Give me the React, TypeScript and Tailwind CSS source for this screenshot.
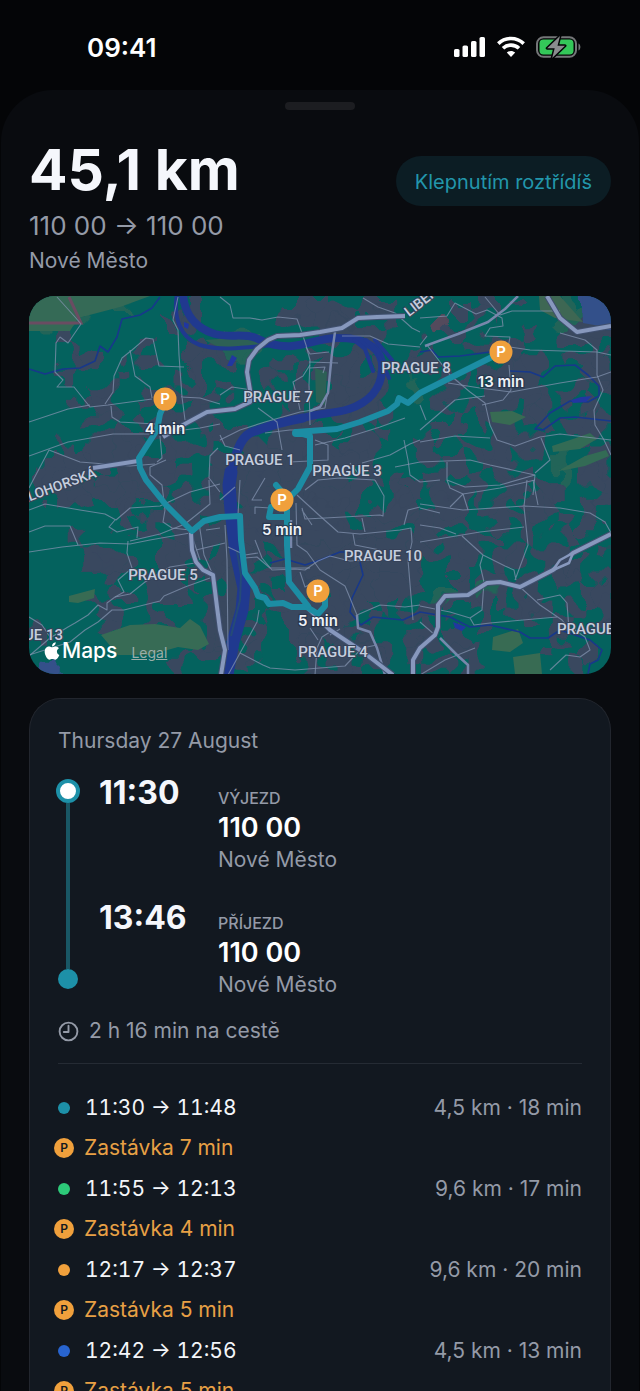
import React from "react";
import { FaApple } from "react-icons/fa";

const sans = "font-['Inter','Noto_Sans',sans-serif]";

/* Land cover: one character per cell. "." park, "#" built-up, "g" meadow, "b" industrial water, "r" campus */
const land = [
  "ggggggg....#.." + "...####..##." + "...#.#.#..g.bb",
  "gggg......##.." + "...######.#." + "....##....ggbb",
  "..#......#...." + "......####.." + "..r#....#..###",
  "...#...#...#.g" + "gg.......#.." + "#...####....#.",
  "...##...#..###" + "...#.####.#." + "##....###..###",
  "..#...#...##.." + "..#.#.####.." + "..##.####...##",
  "....##..####.#" + "....#.####.." + "g.#...####.#..",
  "...###.###.##." + "....#.#####." + "..#.###.##..#.",
  "....##..#####." + "...###.###.." + "...#.##.##.###",
  "......####..##" + "#..####.#.#." + "..##..#..#.##.",
  "..#.####.####." + "##########.." + ".#..#####....#",
  ".####.####...#" + "##########.." + "..##.##...g.##",
  "####.######.##" + "########.#.#" + ".##.#.###.g.##",
  "#.#######...##" + "#########..#" + "#.###.##.##..#",
  "...#..##.####." + "#########.##" + "..##.##.##..##",
  "......#.####.#" + "########.###" + "####..###.#.#.",
  "...#...##.####" + "###########." + "##..##..#..#..",
  "....##...###.#" + "##.#########" + "#####.##.##..#",
  "....###..##.##" + "#.##########" + "#..#..#..###..",
  ".....#..##.#.#" + "###.########" + "#..#.##.#.##.#",
  "......#.###..#" + "##.##.######" + "..g##g#.#...##",
  "....##..#...##" + "#.#######.#." + "###.##.###.#.#",
  ".....#..##..##" + "##..####.#.." + ".#...#..#.#..#",
  "#.....##..#.##" + ".#..######.." + "##.#......#...",
  "...........###" + "##..##.#.##." + "#..##....#..#.",
  ".b........#..#" + "#....####..." + ".##.#......#..",
];

const cover: Record<string, string> = {
  "#": "#39485f",
  g: "#226458",
  b: "#34508a",
  r: "#544a5c",
};

const cells = land.flatMap((row, r) =>
  [...row].flatMap((c, i) =>
    cover[c]
      ? [
          <rect
            key={`${r}-${i}`}
            x={29 + i * 14.55}
            y={296 + r * 14.55}
            width="15"
            height="15"
            fill={cover[c]}
          />,
        ]
      : [],
  ),
);

const streams = [
  "M29 369L45 374L63 369L80 368L95 361L100 346L108 352L117 337L122 319L140 315L152 308L160 297",
  "M420 352L432 350L438 357L460 356L490 352",
  "M510 371L530 372L543 377L555 366L575 365L588 375L599 386L599 396L588 402L570 401L550 413L535 429L543 430L560 418L575 417L611 421",
  "M270 563L285 559L305 565L320 560L340 552L352 552",
  "M360 562L363 575L352 598L350 612L361 625L373 617L403 620L420 612L450 617L470 627L490 625L520 632L530 638L548 638L560 630L590 640L602 650L598 660L590 664L588 674",
];

const streets = [
  "M57 297L75 317L81 324L68 343L60 337L56 343L55 372L63 380L57 387L74 387L90 407L108 405L152 399",
  "M29 422L68 409L90 405M105 404L113 392L114 376L122 358L132 350L146 338L153 339L159 366L184 367",
  "M130 350L135 376L150 387L152 398M111 406L112 417L120 422L155 424",
  "M178 297L173 320L178 330L179 355L182 397L185 420M181 397L200 398L220 404",
  "M29 456L68 442L113 434L150 434L200 428L220 424M49 450L29 488M49 450L80 462L130 466L155 464",
  "M160 436L162 458L157 462M166 460L150 467L150 475L162 485L165 510M218 448L210 456L209 478L220 492",
  "M29 510L45 504L80 510L105 514L116 520L130 508L160 506L190 492L220 484",
  "M115 520L109 527L117 532L138 527L137 538M29 532L45 526L70 526L78 545",
  "M29 552L62 547L100 543L130 544L150 540L190 533M130 541L160 534L185 524L210 504L209 480",
  "M128 541L127 553L132 568L118 580L124 592L115 597L107 603L107 610L98 605L88 615L75 623L68 627L50 638L29 656",
  "M115 597L130 594L145 582L170 567L195 563M124 610L160 601L164 596L185 587L210 578M124 610L112 610L98 622L85 630L70 642L29 655",
  "M29 617L42 625L52 640M165 510L163 522L172 528L190 530L200 560",
  "M220 297L230 305L233 318L250 318L262 320L278 317L297 319L302 333L306 345L310 360L309 385L310 425",
  "M306 347L310 354L329 352M309 362L338 363M310 365L303 376L293 382L298 400L300 410M310 368L325 367L323 373",
  "M220 395L232 387L252 390M258 408L277 422L282 450M220 440L240 430L265 422L300 412L325 408L328 390",
  "M220 435L225 446L240 450M265 433L290 430L310 430M315 445L345 438L380 427L405 418",
  "M315 440L328 445L328 460L290 462M362 463L390 455L410 444L420 440M395 467L420 462M358 473L350 463",
  "M342 336L370 336L388 344L420 347M363 298L378 307L395 313L412 328L420 332",
  "M404 440L408 460L410 475L420 482",
  "M420 318L447 316L455 303L476 314L487 310L502 318L503 326L490 328L485 336L510 337L508 348",
  "M485 297L500 315L512 311L560 311M420 345L427 336M427 345L450 375L470 392L485 403L490 425L497 440L515 446L540 437L560 434L611 440",
  "M510 347L530 350L597 352L611 355M509 365L511 390L503 400L482 405M448 383L480 388L511 392L560 383L597 377L611 372",
  "M560 333L585 340L597 350L597 375L603 390L594 410L595 425L604 440L611 455",
  "M420 430L455 400L485 396M420 405L426 420M420 442L455 436L490 438M420 462L470 460L490 465L535 475L533 495",
  "M541 438L550 460L535 473M447 462L447 480L465 487L500 485L535 475M420 482L440 480",
  "M450 507L463 494L500 488L535 480M420 504L463 510L524 506L560 508L590 513L605 522L611 533",
  "M463 494L468 510M447 480L450 488L463 494M524 506L527 480M533 480L538 505",
  "M524 507L528 545L515 580M420 542L480 532L524 527M462 536L483 555L480 565L484 582M483 555L505 566L514 570L516 580",
  "M420 525L440 528L456 534M420 508L440 513M521 588L540 605L562 620L570 630",
  "M537 600L560 595L567 603L569 630M484 582L482 610L470 618L474 625L490 623L557 617M420 606L450 612L470 618",
  "M575 630L585 637L590 650L580 657L566 655L550 670M420 622L435 635M420 675L445 660L475 648",
  "M220 500L235 487M265 478L252 500L262 500M255 514L255 507L270 508M228 547L245 555L258 553",
  "M255 540L262 558L272 570L295 569L305 570L318 561L330 556L350 561L372 560",
  "M245 558L257 557L270 568L310 568M296 503L297 545L307 552L320 570L345 586L350 598L357 615",
  "M297 495L320 516L338 532L360 534L400 530L411 528L412 542L408 560L413 620",
  "M302 510L312 525M302 508L305 519L325 518L380 515L383 516L384 496L375 480M305 490L318 480L340 478L375 480",
  "M362 518L365 532M353 534L355 545L380 550M420 507L408 510L404 525M357 615L380 605L405 607L420 605",
  "M300 572L305 587L318 580M318 640L310 628M330 632L322 637L317 648L315 675M340 629L330 635",
  "M240 653L263 665L270 668L295 670L345 666L362 648L377 645",
  "M259 610L257 622L228 675M206 530L220 528M196 550L225 543M225 525L227 560L228 650",
  "M199 523L204 555L213 575M240 480L238 515",
];

const motorways = [
  "M163 437L183 425L207 412L235 409L250 402L250 390L247 372L249 360L257 349L268 340L277 336L300 335L320 332L342 328L358 318L377 317L405 316",
  "M138 461L93 468",
  "M191 533L192 550L196 562L203 570L213 575L217 607L220 630L225 650L221 675",
  "M307 607L330 630L363 652L393 675",
  "M413 675L413 660L420 648L435 635L438 627L438 605L445 596L468 595L487 583L500 582L520 587L553 570L573 553L611 534",
  "M547 296L560 318L577 332L611 326",
];

const routes = [
  "M165 403L160 414L157 430L148 444L139 458L140 468L146 480L166 505L192 531L204 521L220 517L240 516L241 540L245 573L255 588L258 596L265 598L269 604L283 603L292 607L307 607L318 614L325 606V596",
  "M287 505V545L289 582L308 606M287 517H269L271 507M276 485L282 492",
  "M290 497L298 489L310 467V436L296 432L337 429L360 422L388 411L397 404L399 398L408 403L420 393L500 353",
];

const stops = [
  { x: 165, y: 399, label: "4 min" },
  { x: 501, y: 352, label: "13 min" },
  { x: 282, y: 500, label: "5 min" },
  { x: 318, y: 591, label: "5 min" },
];

const districts = [
  { x: 278, y: 402, name: "PRAGUE 7" },
  { x: 416, y: 373, name: "PRAGUE 8" },
  { x: 260, y: 465, name: "PRAGUE 1" },
  { x: 347, y: 476, name: "PRAGUE 3" },
  { x: 163, y: 580, name: "PRAGUE 5" },
  { x: 383, y: 561, name: "PRAGUE 10" },
  { x: 333, y: 657, name: "PRAGUE 4" },
  { x: 24, y: 640, name: "PRAGUE 13" },
  { x: 596, y: 634, name: "PRAGUE 15" },
];

function RouteMap() {
  return (
    <div className="relative mt-[21px] overflow-hidden rounded-[26px]">
      <svg viewBox="29 296 582 378" className="block w-full" role="img" aria-label="Route map of Prague">
        <defs>
          <filter id="rough" x="-5%" y="-5%" width="110%" height="110%" colorInterpolationFilters="sRGB">
            <feTurbulence type="fractalNoise" baseFrequency="0.04" numOctaves="2" seed="7" />
            <feDisplacementMap in="SourceGraphic" scale="44" xChannelSelector="R" yChannelSelector="G" />
          </filter>
        </defs>
        <rect x="29" y="296" width="582" height="378" fill="#04625e" />
        <g filter="url(#rough)">{cells}</g>
        <path d="M29 296H150L120 307L78 318L70 331H29Z" fill="#356a56" />
        <path d="M29 323L81 323L69 297" fill="none" stroke="#6a4c62" strokeWidth="3" />
        <path d="M101 635L130 625L155 624L180 628L190 619L200 626L209 644L198 650L178 647L150 655L118 655Z" fill="#376b55" />
        <path d="M493 637L518 629L523 643L510 652L492 650ZM513 657L540 653L542 674H515ZM490 412L512 411L526 417L510 425L492 422Z" fill="#386b53" />
        <path d="M552 446L570 440L590 433L597 439L580 449L553 452ZM558 471L585 456L606 450L609 456L585 466L565 470Z" fill="#336b55" />
        <path d="M69 596L95 589L94 598L78 603L69 602Z" fill="#386b53" />
        <path d="M539 296H560L583 322L555 318L540 310Z" fill="#3e6753" />
        <path d="M582 296H611V328L583 323Z" fill="#33508a" />
        <path d="M315 368L327 372L325 405L316 402ZM205 340L245 337L265 345L240 349L220 348Z" fill="#2d6055" />

        <g fill="none" stroke="#20398f" strokeLinejoin="round" strokeLinecap="round">
          <path strokeWidth="8" d="M183 294C184 310 192 327 215 334C230 338 244 333 256 338C268 344 280 347 292 346C308 345 322 337 340 338C368 338 384 350 382 370C381 388 370 402 349 409C334 414 318 413 303 418" />
          <path strokeWidth="4" d="M177 294C173 317 180 338 200 345C219 351 243 348 273 345M354 340L365 349L373 371M366 340L377 351L389 378M375 340L392 360" />
          <path strokeWidth="9" d="M303 418C281 422 265 427 250 433C239 439 235 457 231 474" />
          <path strokeWidth="13" d="M231 472L229 485L231 510L236 552L244 588L242 610L233 642L226 680" />
        </g>
        <path d="M237 551L241 575L240 600L231 636" fill="none" stroke="#254a77" strokeWidth="2" />
        <g fill="none" stroke="#17388b" strokeWidth="1.6" strokeLinejoin="round">
          {streams.map((d) => (
            <path key={d} d={d} />
          ))}
        </g>
        <path d="M571 400L581 397L592 396L586 402L573 403ZM453 622L466 627L462 631L455 628ZM184 322L189 324L188 329L184 327ZM232 355L237 358L232 366L227 366Z" fill="#2137a0" />
        <g fill="none" stroke="#8191ae" strokeWidth="1.1" strokeOpacity="0.75" strokeLinejoin="round">
          {streets.map((d) => (
            <path key={d} d={d} />
          ))}
        </g>
        <g fill="none" stroke="#7787ab" strokeWidth="2.5" strokeLinejoin="round">
          <path d="M518 296L505 309L488 322L458 334L425 346" />
          <path d="M335 332L332 353L328 393L320 407L310 411" />
          <path d="M357 615L358 628L370 632L377 648L385 675" />
          <path d="M440 638L457 655L468 665V675" />
          <path d="M291 520V548" />
        </g>
        <g fill="none" strokeLinejoin="round">
          {motorways.map((d) => (
            <path key={d} d={d} stroke="#40506f" strokeWidth="6" />
          ))}
          {motorways.map((d) => (
            <path key={d + "fill"} d={d} stroke="#8798bd" strokeWidth="4" />
          ))}
          <path d="M553 570L560 560L573 553L569 563Z" fill="#3a4863" stroke="#8798bd" strokeWidth="2.5" />
        </g>
        <g fill="none" stroke="#1c8da4" strokeWidth="6" strokeLinejoin="round" strokeLinecap="round">
          {routes.map((d) => (
            <path key={d} d={d} />
          ))}
          <path d="M296 433H308" strokeWidth="8" />
        </g>

        <g
          className="font-['Roboto',sans-serif] font-medium"
          fontSize="15"
          textAnchor="middle"
          fill="#c5cede"
          stroke="#354158"
          strokeWidth="2"
          paintOrder="stroke"
        >
          {districts.map((d) => (
            <text key={d.name} x={d.x} y={d.y}>
              {d.name}
            </text>
          ))}
          <text fontSize="14" textAnchor="start" transform="translate(14 507) rotate(-20)">
            BĚLOHORSKÁ
          </text>
          <text fontSize="14" textAnchor="start" transform="translate(409 317) rotate(-38)">
            LIBEŇSKÁ
          </text>
        </g>

        <g className={sans} textAnchor="middle">
          {stops.map((s) => (
            <g key={s.x}>
              <circle cx={s.x} cy={s.y} r="11.5" fill="#f0a03c" />
              <text x={s.x} y={s.y + 5} fontSize="15" fontWeight="600" fill="#fff">
                P
              </text>
              <text
                x={s.x}
                y={s.y + 35}
                fontSize="15"
                fontWeight="600"
                fill="#eef1f6"
                stroke="#26334a"
                strokeWidth="2.5"
                strokeOpacity="0.8"
                paintOrder="stroke"
              >
                {s.label}
              </text>
            </g>
          ))}
        </g>
      </svg>
      <div className="absolute bottom-[9px] left-[13px] flex items-center text-white">
        <FaApple className="size-5" aria-hidden="true" />
        <span className="text-[21px] leading-7 font-medium">Maps</span>
        <a href="#legal" className="ml-[14px] pt-1 text-[14px] leading-4 text-[#9aaea9] underline">
          Legal
        </a>
      </div>
    </div>
  );
}

function StatusBar() {
  return (
    <header className="flex h-[90px] shrink-0 items-center justify-between pr-[59px] pl-[87px]">
      <time className="pt-1.5 text-[26px] leading-8 font-semibold text-white">09:41</time>
      <div className="flex items-center gap-[10px] pt-1">
        <svg width="34" height="22" viewBox="0 0 34 22" fill="#fff" aria-label="Signal">
          <rect x="1" y="13" width="5.5" height="8" rx="1.6" />
          <rect x="9.5" y="9.5" width="5.5" height="11.5" rx="1.6" />
          <rect x="18" y="5" width="5.5" height="16" rx="1.6" />
          <rect x="26.5" y="1" width="5.5" height="20" rx="1.6" />
        </svg>
        <svg width="28" height="22" viewBox="0 0 28 22" fill="none" stroke="#fff" strokeWidth="3.6" aria-label="Wi-Fi">
          <path d="M1.3 7.6C8.3 .7 19.7 .7 26.7 7.6" />
          <path d="M6 12.3C10.5 8 17.5 8 22 12.3" />
          <path d="M14 21L9.8 16.6C12.3 14.3 15.7 14.3 18.2 16.6Z" fill="#fff" stroke="none" />
        </svg>
        <svg width="46" height="24" viewBox="0 0 46 24" aria-label="Battery charging">
          <rect x="2" y="2.2" width="39" height="19.6" rx="6.5" fill="none" stroke="#747678" strokeWidth="2" />
          <path d="M43.5 8.5C46 9.6 46 14.4 43.5 15.5Z" fill="#747678" />
          <rect x="4.5" y="4.6" width="34" height="14.8" rx="4" fill="#34c759" />
          <path
            d="M25 1L12.2 13.3H19.7L17.2 23L30 10.7H22.5Z"
            fill="#8a8c8e"
            stroke="#040507"
            strokeWidth="3"
            strokeLinejoin="round"
            paintOrder="stroke"
          />
        </svg>
      </div>
    </header>
  );
}

function Place({ time, label }: { time: string; label: string }) {
  return (
    <div className="flex">
      <time className="w-[119px] text-[32px] leading-7 font-bold text-[#f5f7fc]">{time}</time>
      <div className="pt-[9px]">
        <p className="text-[16px] leading-5 font-medium text-[#949aa7]">{label}</p>
        <p className="mt-1 text-[27px] leading-8 font-semibold text-white">110 00</p>
        <p className="mt-0.5 text-[21px] leading-7 text-[#949aa7]">Nové Město</p>
      </div>
    </div>
  );
}

const trips = [
  { dot: "bg-[#1d90a8]", from: "11:30", to: "11:48", info: "4,5 km · 18 min", stop: "Zastávka 7 min" },
  { dot: "bg-[#2dca79]", from: "11:55", to: "12:13", info: "9,6 km · 17 min", stop: "Zastávka 4 min" },
  { dot: "bg-[#f0a03c]", from: "12:17", to: "12:37", info: "9,6 km · 20 min", stop: "Zastávka 5 min" },
  { dot: "bg-[#2864cf]", from: "12:42", to: "12:56", info: "4,5 km · 13 min", stop: "Zastávka 5 min" },
];

function TripCard() {
  return (
    <section className="mt-6 rounded-t-[32px] border border-b-0 border-[#22262e] bg-[#121820] px-7 pt-7">
      <h2 className="text-[21px] leading-7 text-[#949aa7]">Thursday 27 August</h2>
      <div className="mt-6 flex gap-[19px]">
        <div className="-ml-0.5 flex w-6 shrink-0 flex-col items-center pb-[10px]">
          <span className="size-6 shrink-0 rounded-full border-4 border-[#1d90a8] bg-white" />
          <span className="w-1 grow bg-[#195765]" />
          <span className="size-5 shrink-0 rounded-full bg-[#1d90a8]" />
        </div>
        <div className="flex flex-col gap-[30px]">
          <Place time="11:30" label="VÝJEZD" />
          <Place time="13:46" label="PŘÍJEZD" />
        </div>
      </div>
      <p className="mt-[18px] flex items-center gap-[10px] text-[21px] leading-7 text-[#949aa7]">
        <svg width="21" height="21" viewBox="0 0 21 21" fill="none" stroke="currentColor" strokeWidth="1.9" aria-hidden="true">
          <circle cx="10.5" cy="10.5" r="8.9" />
          <path d="M10.5 4.8V11H5.8" strokeLinecap="round" strokeLinejoin="round" />
        </svg>
        2 h 16 min na cestě
      </p>
      <ul className="mt-[18px] border-t border-[#252b34] pt-[23px]">
        {trips.map((t) => (
          <li key={t.from}>
            <div className="flex h-[41px] items-center">
              <span className={`size-3 rounded-full ${t.dot}`} />
              <span className="ml-[15px] text-[21px] leading-7 text-[#f3f5f9] tabular-nums">
                {t.from} → {t.to}
              </span>
              <span className="ml-auto text-[21px] leading-7 text-[#949aa7]">{t.info}</span>
            </div>
            <div className="-ml-1 flex h-10 items-center gap-[10px] text-[21px] leading-7 text-[#e8a045]">
              <span className="flex size-5 items-center justify-center rounded-full bg-[#f0a03c] text-[12px] leading-none font-semibold text-[#121820]">
                P
              </span>
              {t.stop}
            </div>
          </li>
        ))}
      </ul>
    </section>
  );
}

export default function App() {
  return (
    <div className={`flex h-screen flex-col overflow-hidden bg-[#040507] ${sans}`}>
      <StatusBar />
      <main className="mx-px min-h-0 grow overflow-y-auto rounded-t-[52px] bg-[#090b0f] px-7 pt-3 [scrollbar-width:none]">
        <div className="mx-auto h-2 w-[70px] rounded-full bg-[#1c1d21]" />
        <div className="mt-8 flex items-start justify-between">
          <div>
            <h1 className="text-[57px] leading-[56px] font-bold text-[#f5f7fc]">45,1 km</h1>
            <p className="mt-3 text-[26px] leading-8 text-[#949aa7]">110 00 → 110 00</p>
            <p className="mt-[5px] text-[21px] leading-7 text-[#949aa7]">Nové Město</p>
          </div>
          <button
            type="button"
            className="mt-[14px] h-[50px] rounded-full bg-[#0c1d24] px-[19px] pt-0.5 text-[20px] leading-7 text-[#2296ab]"
          >
            Klepnutím roztřídíš
          </button>
        </div>
        <RouteMap />
        <TripCard />
      </main>
    </div>
  );
}
